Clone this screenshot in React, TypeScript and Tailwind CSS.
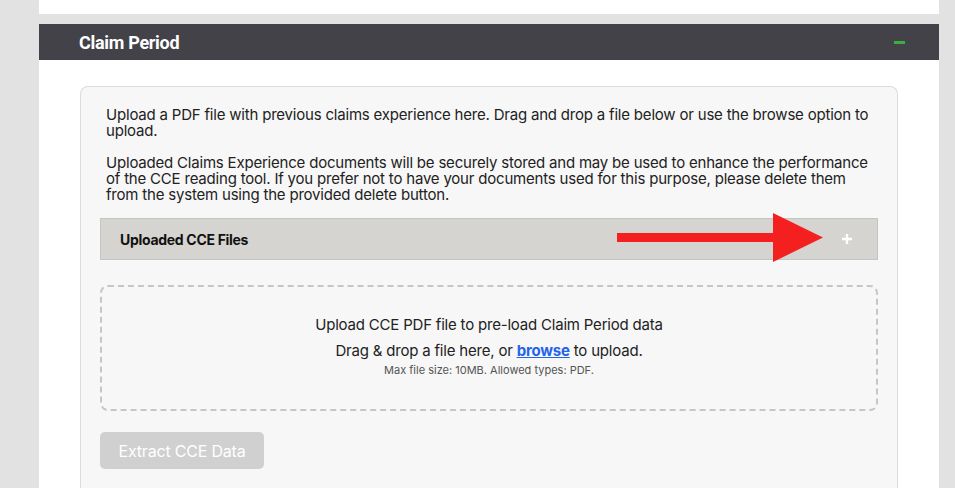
const App = () => {
  return (
    <div className="min-h-screen bg-[#e2e2e2] pl-[39px] pr-[16px] font-['Inter',sans-serif] text-[#222]">
      <div className="h-[14px] bg-white" />
      <div className="mt-[10px] bg-white">
        <div className="flex h-[36px] items-center justify-between bg-[#434249] pl-[40px] pr-[34px]">
          <h2 className="font-['Roboto',sans-serif] text-[18px] font-bold tracking-[-0.3px] text-white">
            Claim Period
          </h2>
          <span className="block h-[3px] w-[11px] bg-[#3cae3f]" />
        </div>
        <div className="px-[41px] pt-[26px]">
          <div className="rounded-t-[8px] border border-b-0 border-[#dcdcdc] bg-[#f7f7f7] px-[19px] pt-[20px] pb-[20px]">
            <div className="px-[6px] text-[15px] leading-[16px] tracking-[-0.2px]">
              <p>
                Upload a PDF file with previous claims experience here. Drag and drop a file below or use the browse option
                to upload.
              </p>
              <p className="mt-[16px]">
                Uploaded Claims Experience documents will be securely stored and may be used to enhance the performance of
                the CCE reading tool. If you prefer not to have your documents used for this purpose, please delete them from
                the system using the provided delete button.
              </p>
            </div>

            <div className="relative mt-[15px] flex h-[42px] items-center justify-between border border-[#c4c4c4] bg-[#d5d4d0] pl-[19px] pr-[24px]">
              <span className="text-[14px] font-bold tracking-[-0.3px] text-[#111]">Uploaded CCE Files</span>
              <svg width="12" height="12" viewBox="0 0 12 12" className="text-white">
                <path d="M6 1v10M1 6h10" stroke="currentColor" strokeWidth="2.4" />
              </svg>
              <svg
                className="absolute left-[516px] top-[-6px]"
                width="206"
                height="50"
                viewBox="0 0 206 50"
              >
                <rect x="0" y="20" width="158" height="9" fill="#f3201f" />
                <polygon points="156,0 206,24.5 156,49" fill="#f3201f" />
              </svg>
            </div>

            <div className="mt-[25px] flex h-[126px] flex-col items-center justify-center rounded-[8px] border-2 border-dashed border-[#c6c6c6] pb-[4px]">
              <p className="text-[15px] leading-[20px] tracking-[-0.2px]">Upload CCE PDF file to pre-load Claim Period data</p>
              <p className="mt-[6px] text-[15px] leading-[20px] tracking-[-0.2px]">
                Drag &amp; drop a file here, or{' '}
                <a href="#" className="font-bold text-[#2463eb] underline">
                  browse
                </a>{' '}
                to upload.
              </p>
              <p className="mt-[2px] text-[11px] leading-[14px] text-[#555]">Max file size: 10MB. Allowed types: PDF.</p>
            </div>

            <button
              disabled
              className="mt-[21px] h-[37px] w-[164px] rounded-[5px] bg-[#d0d0d0] text-[16px] tracking-[-0.2px] text-white"
            >
              Extract CCE Data
            </button>
          </div>
        </div>
      </div>
    </div>
  )
}

export default App
